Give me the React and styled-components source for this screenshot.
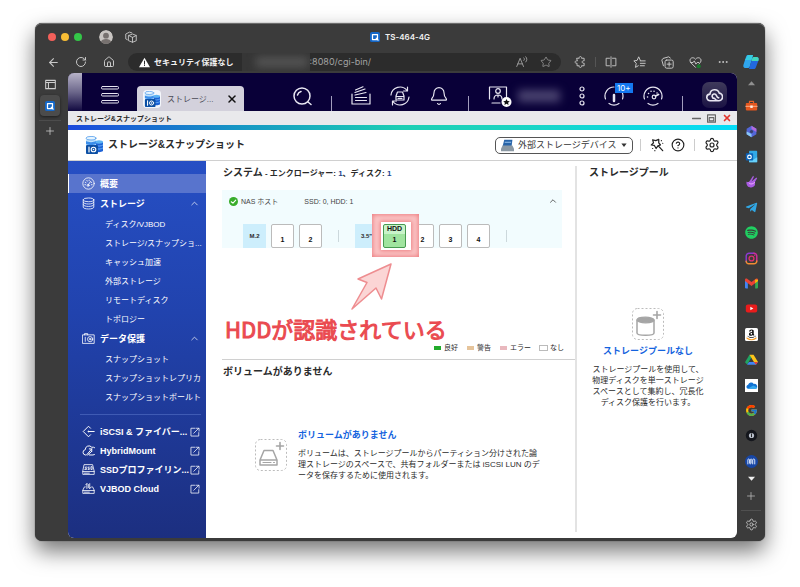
import React from 'react';
import styled, { createGlobalStyle, css } from 'styled-components';
import {
  ArrowLeft,
  Bell,
  ChevronUp,
  CircleHelp,
  Ellipsis,
  House,
  Plus,
  RotateCw,
  Settings,
  Star,
  X,
} from 'lucide-react';
import { FaAmazon, FaSpotify, FaTelegramPlane } from 'react-icons/fa';
import { FcGoogle } from 'react-icons/fc';

const jp = '"Liberation Sans", "Noto Sans CJK JP", sans-serif';
const ui = 'Inter, "Noto Sans CJK JP", sans-serif';

const GlobalStyle = createGlobalStyle`
  * {
    box-sizing: border-box;
  }

  body {
    margin: 0;
    background: #fff;
    color: #2b2b2b;
    font-family: ${jp};
    font-size: 8px;
  }

  h1, h2, h3, p, ul {
    margin: 0;
    padding: 0;
  }

  ul {
    list-style: none;
  }

  button {
    display: flex;
    align-items: center;
    justify-content: center;
    padding: 0;
    border: 0;
    background: none;
    color: inherit;
    font: inherit;
    cursor: pointer;
  }

  a {
    color: inherit;
    text-decoration: none;
  }

  svg {
    display: block;
    flex: none;
  }
`;

/* ---------- browser window ---------- */

const Page = styled.div`
  display: flex;
  flex-direction: column;
  min-height: 100vh;
  padding: 23px 35px 46px;
`;

const BrowserWindow = styled.div`
  flex: 1;
  display: flex;
  flex-direction: column;
  padding-bottom: 3px;
  border-radius: 7px;
  background: #3b3b3b;
  box-shadow: inset 0 1px 0 #6c6c6c, 0 0 1px #222, 0 10px 22px rgba(0, 0, 0, 0.55);
`;

const TitleBar = styled.div`
  display: flex;
  align-items: center;
  height: 28px;
  padding: 0 13px;
`;

const TitleSide = styled.div`
  flex: 1;
  display: flex;
  align-items: center;
  gap: 5px;
`;

const WindowDot = styled.button`
  width: 8px;
  height: 8px;
  border-radius: 50%;
  background: ${({ $color }) => $color};
`;

const Profile = styled.button`
  width: 14px;
  height: 14px;
  margin: 0 7px 0 12px;
  border-radius: 50%;
  overflow: hidden;
`;

const PageTitle = styled.div`
  display: flex;
  align-items: center;
  gap: 5px;
  color: #f0f0f0;
  font: 600 8px/12px ${ui};
`;

const Toolbar = styled.div`
  display: flex;
  align-items: center;
  height: 22px;
  padding-left: 11px;
  color: #c8c8c8;
`;

const NavButtons = styled.div`
  display: flex;
  gap: 14px;
  margin-right: 12px;

  button {
    width: 14px;
    height: 14px;
  }
`;

const AddressBar = styled.div`
  flex: 1;
  display: flex;
  align-items: center;
  height: 18px;
  padding: 0 9px 0 11px;
  border-radius: 9px;
  background: #2c2c2c;
  color: #a3a3a3;
  overflow: hidden;
`;

const SecurityNote = styled.button`
  gap: 4px;
  margin-right: 8px;
  color: #f2f2f2;
  font: bold 8px/12px ${ui};
  white-space: nowrap;
`;

const HiddenHost = styled.span`
  align-self: stretch;
  width: 68px;
  overflow: hidden;
  background: #363636;

  &::before {
    content: '';
    display: block;
    height: 10px;
    margin: 4px 2px 0 14px;
    background: #555;
    filter: blur(4px);
  }
`;

const AddressInput = styled.input`
  flex: 1;
  min-width: 0;
  padding: 0;
  border: 0;
  outline: 0;
  background: none;
  color: #a3a3a3;
  font: 9px/14px ${ui};
`;

const AddressActions = styled.div`
  display: flex;
  gap: 12px;
`;

const BrowserActions = styled.div`
  display: flex;
  align-items: center;
  gap: 14px;
  padding: 0 7px 0 12px;

  button {
    width: 14px;
    height: 14px;
  }
`;

const ActionDivider = styled.span`
  width: 1px;
  height: 10px;
  margin: 0 -6px;
  background: #555;
`;

const Copilot = styled.button`
  width: 28px;
  height: 20px;
`;

const BrowserBody = styled.div`
  flex: 1;
  display: flex;
`;

const TabRail = styled.nav`
  width: 33px;
  display: flex;
  flex-direction: column;
  align-items: center;
  padding: 6px 3px 0 0;
  color: #cfcfcf;
`;

const ActiveTab = styled.button`
  width: 20px;
  height: 21px;
  margin: 5px 0 4px;
  border-radius: 4px;
  background: #4b4b4b;
  box-shadow: 0 1px 3px rgba(0, 0, 0, 0.5);
`;

const NewTab = styled.button`
  width: 22px;
  height: 20px;
  border-top: 1px solid #4c4c4c;
`;

const AppRail = styled.nav`
  width: 28px;
  display: flex;
  flex-direction: column;
  align-items: center;
  color: #bdbdbd;
`;

const ScrollMark = styled.button`
  width: 28px;
  height: ${({ $height }) => $height}px;
`;

const AppList = styled.ul`
  flex: 1;
  display: flex;
  flex-direction: column;

  li {
    flex: 1;
    display: flex;
    align-items: center;
  }

  button {
    width: 14px;
    height: 14px;
  }
`;

const RailButton = styled.button`
  width: 20px;
  height: 28px;

  & + & {
    border-top: 1px solid #505050;
  }
`;

/* ---------- NAS desktop ---------- */

const Desktop = styled.main`
  flex: 1;
  min-width: 0;
  display: flex;
  flex-direction: column;
  border-radius: 6px;
  background: #fff;
  overflow: hidden;
`;

const TopBar = styled.header`
  display: flex;
  height: 38px;
  padding-right: 10px;
  background: #090038;
  color: #e8e6f2;
`;

const BarEdge = styled.div`
  width: 14px;
  background: linear-gradient(#b7b3c8, #6c678b 50%, #110940);
`;

const MenuButton = styled.button`
  width: 55px;
  padding-top: 6px;
`;

const OpenApp = styled.div`
  display: flex;
  align-items: center;
  gap: 6px;
  width: 107px;
  height: 25px;
  margin-top: 13px;
  padding: 0 6px;
  border-radius: 4px 4px 0 0;
  background: #d3d1dc;
  color: #4a4a55;
  font-size: 8px;
  white-space: nowrap;

  button {
    margin-left: auto;
    color: #111;
  }
`;

const OpenAppIcon = styled.span`
  padding: 1px;
  border-radius: 4px;
  background: #f4f6fb;
`;

const BarTools = styled.div`
  flex: 1;
  display: flex;
  align-items: center;
  justify-content: space-between;
  padding: 8px 0 0 48px;
`;

const BarTick = styled.span`
  align-self: flex-end;
  width: 1px;
  height: 15px;
  background: #a29dbd;
`;

const Account = styled.button`
  gap: 6px;

  &::after {
    content: '';
    width: 42px;
    height: 12px;
    background: #4a4370;
    filter: blur(4px);
  }
`;

const Notice = styled.button`
  position: relative;
`;

const NoticeCount = styled.span`
  position: absolute;
  top: -3px;
  left: 11px;
  padding: 0 2px;
  background: #1478f0;
  color: #fff;
  font: 8px/10px ${ui};
`;

const CloudButton = styled.button`
  width: 25px;
  height: 26px;
  margin-bottom: 2px;
  border-radius: 7px;
  background: linear-gradient(#3f3a5b, #1b1344);
`;

const AppTitleBar = styled.div`
  display: flex;
  align-items: center;
  justify-content: space-between;
  height: 14px;
  padding: 0 5px 0 8px;
  background: #e9e9ec;
  font-size: 7px;
  font-weight: bold;
`;

const WindowControls = styled.div`
  display: flex;
  gap: 6px;
  color: #666;
`;

const RainbowLine = styled.div`
  height: 5px;
  background: linear-gradient(90deg, #1c49dc, #1695c4 25%, #1ccfb4 50%, #1cd4c0 65%, #04dcf8);
`;

const AppHeader = styled.div`
  display: flex;
  align-items: center;
  height: 31px;
  padding: 0 17px;
  border-bottom: 1px solid #d0d0d0;
`;

const AppName = styled.h1`
  flex: 1;
  display: flex;
  align-items: center;
  gap: 5px;
  font-size: 10px;
  line-height: 14px;
`;

const DevicePicker = styled.label`
  display: flex;
  align-items: center;
  gap: 4px;
  height: 17px;
  margin-right: 5px;
  padding: 0 5px;
  border: 1px solid #555;
  border-radius: 5px;
`;

const DeviceSelect = styled.select`
  width: 99px;
  padding: 0;
  border: 0;
  outline: 0;
  appearance: none;
  background: none;
  color: #333;
  font: 9px/14px ${jp};
`;

const HeaderTools = styled.div`
  display: flex;
  align-items: center;
  gap: 7px;
  color: #222;
`;

const HeaderDivider = styled.span`
  width: 1px;
  height: 12px;
  margin: 0 2px;
  background: #ccc;
`;

const AppBody = styled.div`
  flex: 1;
  display: flex;
`;

/* ---------- side menu ---------- */

const SideMenu = styled.nav`
  flex: none;
  width: 138px;
  padding: 13px 0 20px;
  background: linear-gradient(#264fc4, #2143ae 40%, #1c2f80);
  color: #fff;
`;

const rowStyle = css`
  display: flex;
  align-items: center;
  width: 100%;
  height: 19px;
  white-space: nowrap;
`;

const MenuGroup = styled.a`
  ${rowStyle}
  gap: 5px;
  height: ${({ $tall }) => ($tall ? 21 : 19)}px;
  padding: 0 6px 0 13px;
  border-left: 1px solid ${({ $active }) => ($active ? '#fff' : 'transparent')};
  background: ${({ $active }) => ($active ? '#5874cd' : 'none')};
  font-size: 9px;
  font-weight: bold;

  span {
    flex: 1;
    min-width: 0;
  }
`;

const MenuItem = styled.a`
  ${rowStyle}
  padding-left: 37px;
  font-size: 8px;
`;

const MenuRule = styled.hr`
  height: 1px;
  margin: 8px 5px 7px 12px;
  border: 0;
  background: #3f5bb4;
`;

/* ---------- panels ---------- */

const Overview = styled.section`
  flex: 1;
  display: flex;
  flex-direction: column;
  padding-left: 16px;
`;

const SystemSection = styled.section`
  display: flex;
  flex-direction: column;
  min-height: 199px;
  padding: 5px 0 6px;
  border-bottom: 1px solid #d0d0d0;
`;

const SectionTitle = styled.h2`
  padding-left: 1px;
  font-size: 10px;
  line-height: 14px;

  small {
    font-size: 8px;
  }

  a {
    color: #1c4390;
  }
`;

const Enclosure = styled.div`
  margin: 9px 13px 0 0;
  padding: 4px 0 0 7px;
  background: #f2fcfe;
`;

const EnclosureHead = styled.div`
  display: flex;
  align-items: center;
  gap: 3px;
  height: 14px;
  padding-right: 4px;
  color: #444;
  font-size: 7px;
`;

const DriveCount = styled.span`
  flex: 1;
  margin-left: 23px;
`;

const Bays = styled.div`
  display: flex;
  align-items: center;
  gap: 5px;
  padding: 16px 0 0 14px;
`;

const BayType = styled.div`
  width: 23px;
  height: 24px;
  background: #cdeefc;
  font-size: 6px;
  font-weight: bold;
  line-height: 24px;
  text-align: center;
`;

const Slot = styled.button`
  position: relative;
  width: 23px;
  height: 24px;
  flex-direction: column;
  justify-content: flex-end;
  border: 1px solid #bbb;
  border-radius: 2px;
  background: #fff;
  color: #111;
  font-size: 7px;
  font-weight: bold;
  line-height: 8px;
  padding-bottom: 3px;
`;

const DriveSlot = styled(Slot)`
  z-index: 2;
  justify-content: space-between;
  border-color: #479a51;
  background: linear-gradient(#c9f3c9 0 9px, #a0e49f 9px);
`;

const Spotlight = styled.div`
  position: relative;

  &::before,
  &::after {
    content: '';
    position: absolute;
    z-index: 1;
  }

  &::before {
    inset: -10px -13px -9px -11px;
    background: #fac6c6;
    box-shadow: inset 0 0 4px 1px #ee7f83;
  }

  &::after {
    inset: -2px -5px -2px -2px;
    background: #fff;
    box-shadow: 0 0 4px 1px #ee7f83;
  }
`;

const BayDivider = styled.span`
  width: 1px;
  height: 12px;
  margin: 0 11px;
  background: #ccd8dc;
`;

const Callout = styled.div`
  margin-top: 15px;
  padding-left: 3px;

  svg {
    margin-left: 125px;
  }
`;

const CalloutText = styled.p`
  margin-top: 5px;
  color: #ea4a50;
  font: 22px/26px "Noto Sans CJK JP", sans-serif;
  -webkit-text-stroke: 1px #ea4a50;
`;

const Legend = styled.ul`
  display: flex;
  justify-content: flex-end;
  gap: 9px;
  margin-top: auto;
  padding-right: 11px;
  font-size: 7px;
  line-height: 10px;

  li {
    display: flex;
    align-items: center;
    gap: 3px;
  }
`;

const Swatch = styled.i`
  width: 7px;
  height: 4px;
  background: ${({ $color }) => $color};
  outline: ${({ $outline }) => ($outline ? '1px solid #bbb' : 'none')};
`;

const VolumeSection = styled.section`
  flex: 1;
  padding-top: 5px;
`;

const VolumeEmpty = styled.div`
  display: flex;
  align-items: center;
  gap: 11px;
  padding: 49px 33px 0;
`;

const EmptyTitle = styled.h3`
  color: #1463de;
  font-size: 9px;
  line-height: 14px;
`;

const EmptyText = styled.p`
  margin-top: ${({ $gap }) => $gap}px;
  font-size: 8px;
  line-height: 11px;
`;

const PoolSection = styled.section`
  flex: none;
  display: flex;
  flex-direction: column;
  width: 162px;
  margin: 5px 0 6px;
  padding-left: 11px;
  border-left: 2px solid #e3e3e3;
`;

const PoolEmpty = styled.div`
  display: flex;
  flex-direction: column;
  align-items: center;
  gap: 4px;
  margin: 128px 29px 0 0;
  text-align: center;
  white-space: nowrap;
`;

const Svg = ({ w = 14, h = w, box = '0 0 16 16', children, ...rest }) => (
  <svg
    width={w}
    height={h}
    viewBox={box}
    fill="none"
    stroke="currentColor"
    strokeWidth="1.2"
    strokeLinecap="round"
    strokeLinejoin="round"
    aria-hidden="true"
    {...rest}
  >
    {children}
  </svg>
);

const QnapMark = () => (
  <Svg w={10} stroke="none">
    <rect width="16" height="16" rx="3" fill="#1467c8" />
    <path d="M4 4h8v8H4z" stroke="#fff" strokeWidth="2" />
    <path d="M10 10l3 3" stroke="#fff" strokeWidth="2" />
  </Svg>
);

const StorageLogo = ({ size = 18 }) => (
  <Svg w={size} box="0 0 18 18" stroke="none">
    <path d="M10 6v9c2 1.500 6 1.500 8 0V6z" fill="#1d62d6" />
    <ellipse cx="14" cy="6" rx="4" ry="1.700" fill="#5cb4f4" />
    <path d="M10 9c2 1.500 6 1.500 8 0M10 12c2 1.500 6 1.500 8 0" stroke="#78c3ff" strokeWidth=".8" />
    <path d="M1 2v7h10V2z" fill="#bfe2fb" />
    <path d="M1 5c2.500 1.500 7.500 1.500 10 0v3c-2.500 1.500-7.500 1.500-10 0z" fill="#3b8eea" />
    <ellipse cx="6" cy="2.200" rx="5" ry="1.800" fill="#e6f5ff" stroke="#3b8eea" strokeWidth=".7" />
    <rect x="1" y="9" width="12" height="9" rx="1" fill="#0c4fa4" />
    <path d="M4 11v5" stroke="#fff" strokeWidth="1.200" />
    <circle cx="8.500" cy="13.500" r="2.300" stroke="#fff" strokeWidth="1.100" />
    <circle cx="8.500" cy="13.500" r=".8" fill="#fff" />
  </Svg>
);

const GaugeIcon = ({ size = 13 }) => (
  <Svg w={size} strokeWidth="1">
    <circle cx="8" cy="8" r="7" />
    <path d="M7.500 10l3-4.500M3.500 9.500h1M4 6.500l.8.4M6 4.200l.4.800M8.800 3.800v.8M12.500 9.500h-1M12 6.500l-.6.300" />
    <circle cx="7.500" cy="10.300" r="1.200" />
  </Svg>
);

const DisksIcon = () => (
  <Svg w={13} strokeWidth="1">
    <ellipse cx="8" cy="3.500" rx="6.500" ry="2.300" />
    <path d="M1.500 3.500v9c0 3 13 3 13 0v-9M1.500 6.500c0 3 13 3 13 0M1.500 9.500c0 3 13 3 13 0" />
  </Svg>
);

const SnapshotIcon = () => (
  <Svg w={13} strokeWidth="1">
    <path d="M1 3.500h14V14H1zM3 3.500V2h4v1.500M4 6.500v5" />
    <circle cx="10" cy="8.800" r="3.200" />
    <circle cx="10" cy="8.800" r="1" />
  </Svg>
);

const IscsiIcon = () => (
  <Svg w={13}>
    <path d="M10.500 4L8 1.500 1.500 8 8 14.500l2.500-2.500M8 8h7" />
    <circle cx="8" cy="8" r=".6" />
  </Svg>
);

const HybridIcon = () => (
  <Svg w={13}>
    <path d="M5 13.500H4a3.300 3.300 0 010-6.500 4.500 4.500 0 018-3 4.800 4.800 0 011.500 9.500H9" />
    <path d="M6 13l6-7M9 6h3v3M7 13.500l5-4.500" />
  </Svg>
);

const SsdIcon = () => (
  <Svg w={13} strokeWidth="1">
    <path d="M3 2h10l2 8v4H1v-4zM1 10.500h14M3 12.500h6" />
    <path d="M6 5H4v1.500h1.500V8H3.500M9 5H7.500v1.500H9V8H7.500M11 5v3h1.500V5z" />
  </Svg>
);

const VjbodIcon = () => (
  <Svg w={13} strokeWidth="1">
    <path d="M4 6H3l-2 4v4h14v-4l-2-4h-1M1 10.500h14M3 12.500h6M6 8V2M4.500 3.500L6 2M9.500 2v6M11 6.500L9.500 8M7.800 3v4" />
  </Svg>
);

const OpenIcon = () => (
  <Svg w={10}>
    <path d="M8 2H1.500v12.500H14V9M6 10l8-8M10 2h4.500v4.500" />
  </Svg>
);

const EmptyDisk = ({ kind }) => (
  <Svg w={32} box="0 0 32 32" stroke="#a5a5a5">
    <rect x=".5" y=".5" width="31" height="31" rx="5" stroke="#bcbcbc" strokeDasharray="2 2" strokeLinecap="butt" strokeWidth="1" />
    <path d="M25 3.500v7M21.500 7h7" strokeWidth="1.600" />
    {kind === 'pool' ? (
      <>
        <path d="M5 12v13c0 3 17 3 17 0V12" strokeWidth="1.500" />
        <ellipse cx="13.500" cy="12" rx="8.500" ry="2.800" fill="#a5a5a5" />
      </>
    ) : (
      <>
        <path d="M5 21l4-9.500h9L22 21v5H5zM5 21h17" strokeWidth="1.500" />
        <path d="M8 23.500h8M18.500 23.500h1" />
      </>
    )}
  </Svg>
);

const railApps = [
  ['Shopping', (
    <>
      <path d="M5.500 5V3h5v2" stroke="#e8632c" strokeWidth="1.500" />
      <rect x="1" y="5" width="14" height="9" rx="1" fill="#e4571f" stroke="none" />
      <path d="M1 9h14" stroke="#ffb18a" />
      <rect x="6.500" y="8" width="3" height="3" fill="#fff0e6" stroke="none" />
    </>
  )],
  ['Microsoft 365', (
    <>
      <path d="M8 1l6 3.500v7L8 15l-6-3.500v-7z" fill="#5266d6" stroke="none" />
      <path d="M8 1l6 3.500v4L8 5z" fill="#b36be0" stroke="none" />
      <path d="M2 8l6 3v4l-6-3.500z" fill="#89c8f6" stroke="none" />
      <circle cx="8" cy="8" r="2" fill="#39406f" stroke="none" />
    </>
  )],
  ['Outlook', (
    <>
      <rect x="5" y="1" width="10" height="14" rx="1" fill="#31a9e8" stroke="none" />
      <path d="M5 9l5 3 5-3v6H5z" fill="#66d0fa" stroke="none" />
      <rect x="1" y="4" width="9" height="9" rx="1" fill="#0b62b8" stroke="none" />
      <circle cx="5.500" cy="8.500" r="2.200" stroke="#fff" strokeWidth="1.500" />
    </>
  )],
  ['Designer', (
    <>
      <path d="M2 8c1 1 3 1 4-1l4-6 1 1-3 6 6-5 1 1-3 5c2 5-3 7-6 6-3 0-5-4-4-7z" fill="#a95ce2" stroke="none" />
      <path d="M5 10c2 2 5 1 7-1" stroke="#f3b5ff" />
    </>
  )],
  ['Telegram', <FaTelegramPlane size={16} color="#31a7e4" stroke="none" />],
  ['Spotify', <FaSpotify size={16} color="#20cf61" stroke="none" />],
  ['Instagram', (
    <>
      <path d="M1.500 12V5a3.500 3.500 0 013.500-3.500h6" stroke="#8c3ad0" strokeWidth="1.800" />
      <path d="M11 1.500A3.500 3.500 0 0114.500 5v6" stroke="#d02c9a" strokeWidth="1.800" />
      <path d="M1.500 11.500A3 3 0 005 14.500h6a3.500 3.500 0 003.500-3.500" stroke="#f28b31" strokeWidth="1.800" />
      <circle cx="8" cy="8" r="3" stroke="#dc3170" strokeWidth="1.600" />
      <circle cx="12" cy="4" r=".8" fill="#d02c9a" stroke="none" />
    </>
  )],
  ['Gmail', (
    <g stroke="none">
      <path d="M0 4l3.500 2.500V14H1a1 1 0 01-1-1z" fill="#4285f4" />
      <path d="M16 4l-3.500 2.500V14H15a1 1 0 001-1z" fill="#34a853" />
      <path d="M0 3.500C0 2 2 1.500 3 2.500L8 6.300l5-3.800c1-1 3-.5 3 1V5l-8 6-8-6z" fill="#ea4335" />
      <path d="M12.500 3L16 3.500V5l-3.500 2.600z" fill="#fbbc04" />
    </g>
  )],
  ['YouTube', (
    <g stroke="none">
      <rect x="1" y="3" width="14" height="10" rx="2.500" fill="#e91c1c" />
      <path d="M6.500 5.700v4.600L10.300 8z" fill="#fff" />
    </g>
  )],
  ['Amazon', (
    <g stroke="none">
      <rect width="16" height="16" rx="2" fill="#fff" />
      <FaAmazon x={2} y={1} size={12} color="#111" />
      <path d="M2 11.500c4 3 8 3 12 0v1.800c-4 2.500-8 2.500-12 0z" fill="#f7991f" />
    </g>
  )],
  ['Drive', (
    <g stroke="none">
      <path d="M5.500 2L0 11.500 2.700 14 8.200 5z" fill="#1fa463" />
      <path d="M5.500 2h5L16 11h-5z" fill="#fcc419" />
      <path d="M5 11h11l-2.500 3.500h-11z" fill="#4285f4" />
      <path d="M11 11h5l-2.500 3.500z" fill="#ea4335" />
    </g>
  )],
  ['OneDrive', (
    <g stroke="none">
      <rect width="16" height="16" fill="#fff" />
      <path d="M3.500 12a2.600 2.600 0 01.3-5 4 4 0 017-1A3.200 3.200 0 0113 12z" fill="#1273d4" />
      <path d="M3.500 12L10 8l5 2.500c0 1-1 1.500-2 1.500z" fill="#35a9ee" />
    </g>
  )],
  ['Google', <FcGoogle size={16} />],
  ['Music', (
    <g stroke="none">
      <circle cx="8" cy="8" r="7" fill="#15171d" />
      <circle cx="8" cy="8" r="3.200" fill="#b9c0cc" />
      <path d="M8 6v3.500" stroke="#222" />
    </g>
  )],
  ['Analytics', (
    <>
      <circle cx="8" cy="8" r="8" fill="#1746a5" stroke="none" />
      <path d="M3.500 11V6c0-1.500 2-1.500 2 0v4M6.500 11V6c0-1.500 2-1.500 2 0v4M9.500 11V6c0-1.500 2.500-1.500 2.500 0v5" stroke="#d9e5fb" />
    </>
  )],
];

const storageItems = [
  'ディスク/VJBOD',
  'ストレージ/スナップショ...',
  'キャッシュ加速',
  '外部ストレージ',
  'リモートディスク',
  'トポロジー',
];

const protectionItems = [
  'スナップショット',
  'スナップショットレプリカ',
  'スナップショットボールト',
];

const links = [
  ['iSCSI & ファイバー...', IscsiIcon],
  ['HybridMount', HybridIcon],
  ['SSDプロファイリン...', SsdIcon],
  ['VJBOD Cloud', VjbodIcon],
];

const legend = [
  ['良好', '#22ab2b'],
  ['警告', '#e6c49b'],
  ['エラー', '#e9b8be'],
  ['なし', '#fff', true],
];

const BrowserChrome = () => (
  <>
    <TitleBar>
      <TitleSide>
        <WindowDot $color="#f4605a" aria-label="閉じる" />
        <WindowDot $color="#f8bd35" aria-label="最小化" />
        <WindowDot $color="#34c648" aria-label="拡大" />
        <Profile aria-label="プロフィール">
          <Svg stroke="none">
            <circle cx="8" cy="8" r="8" fill="#c9c5c2" />
            <circle cx="8" cy="6.500" r="3.300" fill="#77716f" />
            <path d="M2 14c1-5 11-5 12 0l-3 2H5z" fill="#77716f" />
          </Svg>
        </Profile>
        <Svg w={12} color="#c8c8c8">
          <path d="M5 6l5-2 5 2v7l-5 2-5-2zM5 6l5 2.500L15 6M10 8.500V15M3 11.500l-2-1V4l5-2.500 3 1" />
        </Svg>
      </TitleSide>
      <PageTitle>
        <QnapMark />
        TS-464-4G
      </PageTitle>
      <TitleSide />
    </TitleBar>
    <Toolbar>
      <NavButtons>
        <button type="button" aria-label="戻る"><ArrowLeft size={13} /></button>
        <button type="button" aria-label="更新"><RotateCw size={12} /></button>
        <button type="button" aria-label="ホーム"><House size={12} /></button>
      </NavButtons>
      <AddressBar>
        <SecurityNote type="button">
          <Svg w={11} stroke="none">
            <path d="M8 1l8 14H0z" fill="#fff" />
            <path d="M8 6v4M8 12v.5" stroke="#2c2c2c" strokeWidth="1.500" />
          </Svg>
          セキュリティ保護なし
        </SecurityNote>
        <HiddenHost />
        <AddressInput aria-label="アドレス" defaultValue=":8080/cgi-bin/" />
        <AddressActions>
          <button type="button" aria-label="読み上げ">
            <Svg w={12}>
              <path d="M1 14L5.500 3 10 14M2.500 10.500h6M10.500 2.500c1 1 1 2.500 0 3.500M13 1c2 2 2 5 0 7" />
            </Svg>
          </button>
          <button type="button" aria-label="お気に入りに追加"><Star size={12} strokeWidth={1.5} /></button>
        </AddressActions>
      </AddressBar>
      <BrowserActions>
        <button type="button" aria-label="拡張機能">
          <Svg w={12}>
            <path d="M4 3h3c-1-3 4-3 3 0h3.500v3.500c-3.500-1-3.500 4 0 3V13H10c1 3-4 3-3 0H4V9.500c-3.500 1-3.500-4 0-3z" />
          </Svg>
        </button>
        <ActionDivider />
        <button type="button" aria-label="分割">
          <Svg w={12}><path d="M6 3H1.500v10H6M10 3h4.500v10H10M8 1v14" /></Svg>
        </button>
        <button type="button" aria-label="お気に入り">
          <Svg w={13}><path d="M9 5.500L7 1 5 5.500l-4 .5 3 3-1 5 3.500-2M9 6h6M9 9h6M9 12h5" /></Svg>
        </button>
        <button type="button" aria-label="コレクション">
          <Svg w={13}>
            <rect x="5" y="5" width="10" height="10" rx="2" />
            <path d="M10 7.500v5M7.500 10h5M3 12l-2-7 1.500-2 7-2 2 1.500" />
          </Svg>
        </button>
        <button type="button" aria-label="パフォーマンス">
          <Svg w={13}>
            <path d="M8 14L2 8C-1 3 5 0 8 4c3-4 9-1 6 4l-2 2M2 8h3l1.500-2 2 4L10 8h2" />
            <circle cx="12" cy="12.500" r="2.500" fill="#167a2b" stroke="none" />
          </Svg>
        </button>
        <button type="button" aria-label="その他"><Ellipsis size={12} /></button>
      </BrowserActions>
      <Copilot type="button" aria-label="Copilot">
        <Svg w={16} stroke="none">
          <path d="M5 1h5L7 12c-.5 1.500-1 2-2.500 2H3c-3 0-3-2-2.300-4L3 3c.5-1.500 1-2 2-2z" fill="#2fa5ee" />
          <path d="M5 1h5L8.500 6H2z" fill="#35cce0" />
          <path d="M11 15H6l3-10c.5-1.500 1-2 2.500-2H13c3 0 3 2 2.300 4L13 13c-.5 1.500-1 2-2 2z" fill="#2268e0" />
          <path d="M9 5c.5-1.500 1-2 2.500-2H13c3 0 3 2 2.300 4H8.400z" fill="#42d6be" />
        </Svg>
      </Copilot>
    </Toolbar>
  </>
);

const NasTopBar = () => (
  <TopBar>
    <BarEdge />
    <MenuButton type="button" aria-label="メニュー">
      <Svg w={18} box="0 0 18 18" strokeWidth="1">
        <rect x=".5" y=".5" width="17" height="2.500" rx="1" />
        <rect x=".5" y="7.500" width="17" height="2.500" rx="1" />
        <rect x=".5" y="14.500" width="17" height="2.500" rx="1" />
      </Svg>
    </MenuButton>
    <OpenApp>
      <OpenAppIcon><StorageLogo size={16} /></OpenAppIcon>
      ストレージ...
      <button type="button" aria-label="タブを閉じる"><X size={12} strokeWidth={3} /></button>
    </OpenApp>
    <BarTools>
      <button type="button" aria-label="検索">
        <Svg w={20} box="0 0 20 20" strokeWidth="1.5">
          <circle cx="10" cy="10" r="8" />
          <path d="M16 16l3 2.500M5.500 9A5 5 0 019 5.500" />
        </Svg>
      </button>
      <BarTick />
      <button type="button" aria-label="バックグラウンドタスク">
        <Svg w={20} box="0 0 20 20">
          <path d="M1 8v10h18V8M4.500 14.500h11M4.500 11.500h11M4 9l11-2.500M4 6.500L14 3M4.500 4L12 .8" />
        </Svg>
      </button>
      <button type="button" aria-label="外部デバイス">
        <Svg w={20} box="0 0 20 20">
          <path d="M1 9A9 9 0 0117 4.500M17.500 1v4h-4M19 11A9 9 0 013 15.500M2.500 19v-4h4" />
          <path d="M6 10l1.500-4h5L14 10v4H6zM6 10.500h8M8 12.300h4" />
        </Svg>
      </button>
      <button type="button" aria-label="通知"><Bell size={20} strokeWidth={1.4} /></button>
      <BarTick />
      <Account type="button" aria-label="アカウント">
        <Svg w={24} h={22} box="0 0 24 22">
          <path d="M12 18H4M1.500 14V2h17v10" />
          <circle cx="10" cy="6" r="2.300" />
          <path d="M6 14c0-2.500 1.500-4 4-4s4 1.500 4 4M10 10v2" />
          <circle cx="18.500" cy="17" r="5" fill="#fff" stroke="none" />
          <path d="M18.500 14l1 2.100 2.300.2-1.700 1.500.5 2.200-2.100-1.200-2.100 1.200.5-2.200-1.700-1.500 2.300-.2z" fill="#111" stroke="none" />
        </Svg>
      </Account>
      <button type="button" aria-label="その他の操作">
        <Svg w={6} h={20} box="0 0 6 20">
          <circle cx="3" cy="3" r="2" />
          <circle cx="3" cy="10" r="2" />
          <circle cx="3" cy="17" r="2" />
        </Svg>
      </button>
      <Notice type="button" aria-label="情報">
        <Svg w={20} box="0 0 20 20">
          <path d="M1.500 13A9 9 0 0110 1M18.500 13A9 9 0 0018 6M5 17.500c3 2 7 2 10 0" />
          <path d="M10 9v6" strokeWidth="2.500" />
        </Svg>
        <NoticeCount>10+</NoticeCount>
      </Notice>
      <button type="button" aria-label="ダッシュボード">
        <Svg w={20} box="0 0 20 20">
          <path d="M1.500 13a9 9 0 1117 0M5 17.500c3 2 7 2 10 0" />
          <path d="M4.500 11h.1M5.500 7.500h.1M8 5.300h.1M11 5.300h.1M14 7h.1" strokeWidth="1.500" />
          <circle cx="11" cy="11" r="1.800" />
          <path d="M12.500 10l3-1.500" strokeWidth="1.800" />
        </Svg>
      </button>
      <BarTick />
      <CloudButton type="button" aria-label="クラウド">
        <Svg w={17} box="0 0 18 16" strokeWidth="1.700">
          <path d="M13 13.500H4.500a3.500 3.500 0 01-.3-7A5 5 0 0114 5.500a4 4 0 01-1 8c-2 0-3-1-4-2.500a2.300 2.300 0 112-3c.5 1.500 1 2.500 2.500 2.500" />
        </Svg>
      </CloudButton>
    </BarTools>
  </TopBar>
);

const Menu = () => (
  <SideMenu>
    <MenuGroup href="#overview" $active>
      <GaugeIcon />
      <span>概要</span>
    </MenuGroup>
    <MenuGroup href="#storage" $tall>
      <DisksIcon />
      <span>ストレージ</span>
      <ChevronUp size={11} strokeWidth={1.5} />
    </MenuGroup>
    {storageItems.map(label => (
      <MenuItem key={label} href="#storage">{label}</MenuItem>
    ))}
    <MenuGroup href="#protection" $tall>
      <SnapshotIcon />
      <span>データ保護</span>
      <ChevronUp size={11} strokeWidth={1.5} />
    </MenuGroup>
    {protectionItems.map(label => (
      <MenuItem key={label} href="#protection">{label}</MenuItem>
    ))}
    <MenuRule />
    {links.map(([label, Icon]) => (
      <MenuGroup key={label} href="#external">
        <Icon />
        <span>{label}</span>
        <OpenIcon />
      </MenuGroup>
    ))}
  </SideMenu>
);

const SystemPanel = () => (
  <SystemSection>
    <SectionTitle>
      システム
      <small>
        {' - エンクロージャー: '}
        <a href="#enclosure">1</a>
        、ディスク:
        {' '}
        <a href="#disk">1</a>
      </small>
    </SectionTitle>
    <Enclosure>
      <EnclosureHead>
        <Svg w={9} stroke="none">
          <circle cx="8" cy="8" r="8" fill="#39ad2c" />
          <path d="M4 8.500L7 11l5-5.500" stroke="#fff" strokeWidth="2" />
        </Svg>
        NAS ホスト
        <DriveCount>SSD: 0, HDD: 1</DriveCount>
        <ChevronUp size={10} />
      </EnclosureHead>
      <Bays>
        <BayType>M.2</BayType>
        <Slot type="button">1</Slot>
        <Slot type="button">2</Slot>
        <BayDivider />
        <BayType>3.5&quot;</BayType>
        <Spotlight>
          <DriveSlot type="button">
            <span>HDD</span>
            <span>1</span>
          </DriveSlot>
        </Spotlight>
        <Slot type="button">2</Slot>
        <Slot type="button">3</Slot>
        <Slot type="button">4</Slot>
        <BayDivider />
      </Bays>
    </Enclosure>
    <Callout>
      <Svg w={42} h={47} box="0 0 42 47" strokeWidth="1.5">
        <path d="M41 1L8 16l9 3.500L2 46l24-21 5.500 11z" fill="#fbd5d5" stroke="#ee8d90" />
      </Svg>
      <CalloutText>HDDが認識されている</CalloutText>
    </Callout>
    <Legend>
      {legend.map(([label, color, outline]) => (
        <li key={label}>
          <Swatch $color={color} $outline={outline} />
          {label}
        </li>
      ))}
    </Legend>
  </SystemSection>
);

const StorageApp = () => (
  <>
    <AppTitleBar>
      ストレージ&amp;スナップショット
      <WindowControls>
        <button type="button" aria-label="最小化"><Svg w={9}><path d="M1 8h14" strokeWidth="2.500" /></Svg></button>
        <button type="button" aria-label="元に戻す">
          <Svg w={9}><path d="M1 1.500h14v13H1zM4 6.500h8V12H4z" strokeWidth="2" /></Svg>
        </button>
        <button type="button" aria-label="閉じる"><X size={10} strokeWidth={4} color="#e2332c" /></button>
      </WindowControls>
    </AppTitleBar>
    <RainbowLine />
    <AppHeader>
      <AppName>
        <StorageLogo />
        ストレージ&amp;スナップショット
      </AppName>
      <DevicePicker>
        <Svg w={13} stroke="none">
          <path d="M4 1h10l-1 8H2z" fill="#2864a8" />
          <path d="M2 8h12l2 4v3H0v-3z" fill="#8b98a3" />
          <path d="M5 4h7" stroke="#9ac4ee" />
        </Svg>
        <DeviceSelect aria-label="外部ストレージデバイス">
          <option>外部ストレージデバイス</option>
        </DeviceSelect>
        <Svg w={6} stroke="none"><path d="M1 4h14l-7 9z" fill="#333" /></Svg>
      </DevicePicker>
      <HeaderTools>
        <HeaderDivider />
        <button type="button" aria-label="クイック設定">
          <Svg w={14} strokeWidth="1.400">
            <path d="M3 2l3.500 1L10 1.500v4L12 8l-3 1-2 3-2-3.500L1.500 8 4 5.500zM10 9.500l4.500 5" />
            <path d="M13 3h.1M14.500 6h.1M3 12h.1M5.500 14.500h.1" />
          </Svg>
        </button>
        <button type="button" aria-label="ヘルプ"><CircleHelp size={14} /></button>
        <HeaderDivider />
        <button type="button" aria-label="設定"><Settings size={16} strokeWidth={1.8} /></button>
      </HeaderTools>
    </AppHeader>
    <AppBody>
      <Menu />
      <Overview>
        <SystemPanel />
        <VolumeSection>
          <SectionTitle>ボリュームがありません</SectionTitle>
          <VolumeEmpty>
            <EmptyDisk kind="volume" />
            <div>
              <EmptyTitle>ボリュームがありません</EmptyTitle>
              <EmptyText $gap={6}>
                ボリュームは、ストレージプールからパーティション分けされた論
                <br />
                理ストレージのスペースで、共有フォルダーまたは iSCSI LUN のデ
                <br />
                ータを保存するために使用されます。
              </EmptyText>
            </div>
          </VolumeEmpty>
        </VolumeSection>
      </Overview>
      <PoolSection>
        <SectionTitle>ストレージプール</SectionTitle>
        <PoolEmpty>
          <EmptyDisk kind="pool" />
          <EmptyTitle>ストレージプールなし</EmptyTitle>
          <EmptyText $gap={2}>
            ストレージプールを使用して、
            <br />
            物理ディスクを単一ストレージ
            <br />
            スペースとして集約し、冗長化
            <br />
            ディスク保護を行います。
          </EmptyText>
        </PoolEmpty>
      </PoolSection>
    </AppBody>
  </>
);

const App = () => (
  <Page>
    <GlobalStyle />
    <BrowserWindow>
      <BrowserChrome />
      <BrowserBody>
        <TabRail>
          <button type="button" aria-label="タブ操作">
            <Svg w={11}><path d="M1 2h14v12H1zM1 5h14M5 5v9" strokeWidth="1.500" /></Svg>
          </button>
          <ActiveTab type="button" aria-label="TS-464-4G"><QnapMark /></ActiveTab>
          <NewTab type="button" aria-label="新しいタブ"><Plus size={12} strokeWidth={1.5} /></NewTab>
        </TabRail>
        <Desktop>
          <NasTopBar />
          <StorageApp />
        </Desktop>
        <AppRail>
          <ScrollMark type="button" aria-label="上へ" $height={20}>
            <Svg w={7} stroke="none"><path d="M0 12l8-9 8 9z" fill="#909090" /></Svg>
          </ScrollMark>
          <AppList>
            {railApps.map(([name, art]) => (
              <li key={name}>
                <button type="button" aria-label={name}><Svg w={13}>{art}</Svg></button>
              </li>
            ))}
          </AppList>
          <ScrollMark type="button" aria-label="下へ" $height={8}>
            <Svg w={7} stroke="none"><path d="M0 4l8 9 8-9z" fill="#f0f0f0" /></Svg>
          </ScrollMark>
          <RailButton type="button" aria-label="追加"><Plus size={12} strokeWidth={1.5} /></RailButton>
          <RailButton type="button" aria-label="サイドバー設定"><Settings size={13} strokeWidth={1.8} /></RailButton>
        </AppRail>
      </BrowserBody>
    </BrowserWindow>
  </Page>
);

export default App;
